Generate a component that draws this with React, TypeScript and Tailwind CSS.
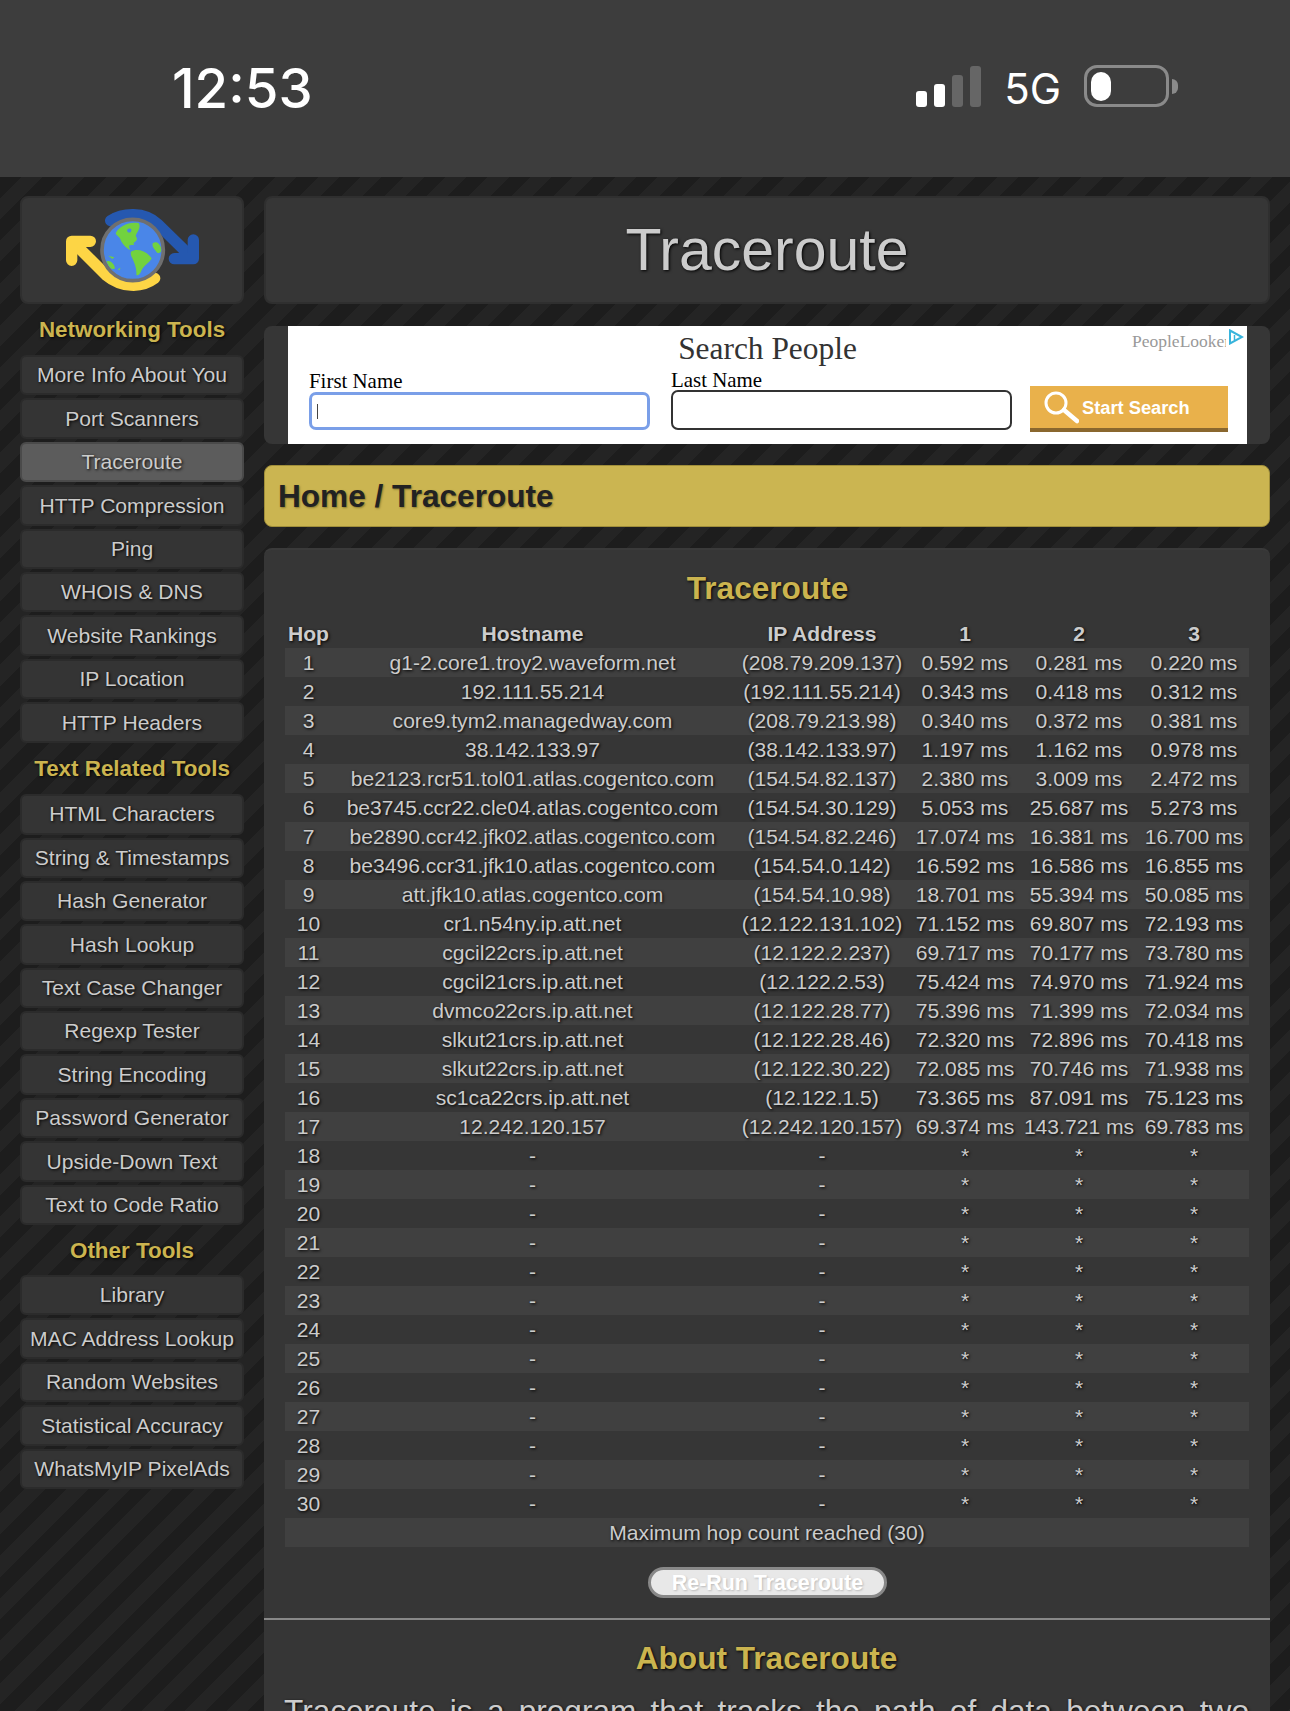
const shadow = "[text-shadow:1px_1px_3px_#000]";

const networking = ["More Info About You", "Port Scanners", "Traceroute", "HTTP Compression", "Ping", "WHOIS & DNS", "Website Rankings", "IP Location", "HTTP Headers"];
const textTools = ["HTML Characters", "String & Timestamps", "Hash Generator", "Hash Lookup", "Text Case Changer", "Regexp Tester", "String Encoding", "Password Generator", "Upside-Down Text", "Text to Code Ratio"];
const otherTools = ["Library", "MAC Address Lookup", "Random Websites", "Statistical Accuracy", "WhatsMyIP PixelAds"];

const hops = [
  ["g1-2.core1.troy2.waveform.net", "(208.79.209.137)", "0.592 ms", "0.281 ms", "0.220 ms"],
  ["192.111.55.214", "(192.111.55.214)", "0.343 ms", "0.418 ms", "0.312 ms"],
  ["core9.tym2.managedway.com", "(208.79.213.98)", "0.340 ms", "0.372 ms", "0.381 ms"],
  ["38.142.133.97", "(38.142.133.97)", "1.197 ms", "1.162 ms", "0.978 ms"],
  ["be2123.rcr51.tol01.atlas.cogentco.com", "(154.54.82.137)", "2.380 ms", "3.009 ms", "2.472 ms"],
  ["be3745.ccr22.cle04.atlas.cogentco.com", "(154.54.30.129)", "5.053 ms", "25.687 ms", "5.273 ms"],
  ["be2890.ccr42.jfk02.atlas.cogentco.com", "(154.54.82.246)", "17.074 ms", "16.381 ms", "16.700 ms"],
  ["be3496.ccr31.jfk10.atlas.cogentco.com", "(154.54.0.142)", "16.592 ms", "16.586 ms", "16.855 ms"],
  ["att.jfk10.atlas.cogentco.com", "(154.54.10.98)", "18.701 ms", "55.394 ms", "50.085 ms"],
  ["cr1.n54ny.ip.att.net", "(12.122.131.102)", "71.152 ms", "69.807 ms", "72.193 ms"],
  ["cgcil22crs.ip.att.net", "(12.122.2.237)", "69.717 ms", "70.177 ms", "73.780 ms"],
  ["cgcil21crs.ip.att.net", "(12.122.2.53)", "75.424 ms", "74.970 ms", "71.924 ms"],
  ["dvmco22crs.ip.att.net", "(12.122.28.77)", "75.396 ms", "71.399 ms", "72.034 ms"],
  ["slkut21crs.ip.att.net", "(12.122.28.46)", "72.320 ms", "72.896 ms", "70.418 ms"],
  ["slkut22crs.ip.att.net", "(12.122.30.22)", "72.085 ms", "70.746 ms", "71.938 ms"],
  ["sc1ca22crs.ip.att.net", "(12.122.1.5)", "73.365 ms", "87.091 ms", "75.123 ms"],
  ["12.242.120.157", "(12.242.120.157)", "69.374 ms", "143.721 ms", "69.783 ms"],
];

const rows = Array.from({ length: 30 }, (_, i) => hops[i] ?? ["-", "-", "*", "*", "*"]);

function StatusBar() {
  return (
    <header className="flex h-[177px] items-center bg-[#3d3d3d] pl-[172px] pr-[112px] font-['Inter',sans-serif] text-white">
      <div className="text-[54.5px] font-medium leading-none">12:53</div>
      <div className="ml-auto flex items-center">
        <div className="mb-[4px] flex items-end gap-[7px]">
          <span className="h-[16px] w-[11px] rounded-[3px] bg-white" />
          <span className="h-[23px] w-[11px] rounded-[3px] bg-white" />
          <span className="h-[32px] w-[11px] rounded-[3px] bg-[#666]" />
          <span className="h-[41px] w-[11px] rounded-[3px] bg-[#666]" />
        </div>
        <div className="ml-[23px] text-[42px] leading-none">5G</div>
        <div className="mb-[5px] ml-[23px] flex h-[42px] w-[85px] items-center rounded-[13px] border-[3px] border-[#8a8a8a] pl-[4px]">
          <span className="h-[29px] w-[20px] rounded-[10px] bg-white" />
        </div>
        <span className="mb-[5px] ml-[3px] h-[15px] w-[6px] rounded-r-full bg-[#8a8a8a]" />
      </div>
    </header>
  );
}

function Logo() {
  return (
    <svg viewBox="0 0 510 300" className="ml-[7px] h-[100px] w-[170px]" fill="none">
      <defs>
        <clipPath id="globe">
          <circle cx="245" cy="150" r="86" />
        </clipPath>
      </defs>
      <g strokeWidth="34" strokeLinecap="round" strokeLinejoin="round">
        <path d="M179 62C215 38 280 34 320 72L415 165" stroke="#2558b0" />
        <path d="M427 120V176H370" stroke="#2558b0" />
        <path d="M80 140L165 225C210 262 270 266 311 235" stroke="#fdd545" />
        <path d="M62 181V124H118" stroke="#fdd545" />
      </g>
      <circle cx="245" cy="150" r="92" fill="#4a86e8" stroke="#6f6f6f" strokeWidth="11" />
      <g clipPath="url(#globe)" fill="#72d23f">
        <path d="M194 100C205 78 235 64 264 70C270 85 260 92 254 108C264 120 252 125 247 130C237 133 230 135 238 150C224 144 212 130 208 117C204 110 196 106 194 100Z" />
        <path d="M240 155C255 145 285 150 302 175C295 190 280 195 272 210C268 222 262 228 256 225C258 205 250 190 244 175C240 168 238 160 240 155Z" />
        <path d="M305 130C315 122 327 128 332 150C330 158 320 165 314 152C308 145 303 140 305 130Z" />
        <path d="M165 185C175 178 190 190 192 205C185 210 170 205 165 185Z" />
        <path d="M172 167L190 172L184 177Z" />
        <path d="M200 208L209 203L205 211Z" />
        <path d="M225 128L245 126L250 134L236 136Z" />
      </g>
      <path d="M228 90C235 82 245 85 240 95C236 100 228 98 228 90Z" fill="#4a86e8" />
    </svg>
  );
}

function NavButton({ label, active }: { label: string; active?: boolean }) {
  return (
    <a
      className={`mb-[3px] flex h-[40.4px] items-center justify-center whitespace-nowrap rounded-[6px] border-2 text-[21.1px] text-[#ccc] ${shadow} ${
        active ? "border-[#4a4a4a] bg-[#5c5c5c]" : "border-[#2b2b2b] bg-[#343434]"
      }`}
    >
      {label}
    </a>
  );
}

function NavSection({ title, items, height }: { title: string; items: string[]; height: string }) {
  return (
    <nav>
      <h3 className={`flex items-center justify-center text-[22.4px] font-bold text-[#cbb44f] ${height} ${shadow}`}>{title}</h3>
      {items.map((item) => (
        <NavButton key={item} label={item} active={item === "Traceroute"} />
      ))}
    </nav>
  );
}

function Sidebar() {
  return (
    <aside className="w-[224px] shrink-0">
      <div className="flex h-[108px] items-center justify-center rounded-[8px] border-2 border-[#2f2f2f] bg-[#363636]">
        <Logo />
      </div>
      <NavSection title="Networking Tools" items={networking} height="h-[51px]" />
      <NavSection title="Text Related Tools" items={textTools} height="h-[48.6px] pb-[2px]" />
      <NavSection title="Other Tools" items={otherTools} height="h-[47px] pb-[2px]" />
    </aside>
  );
}

function Ad() {
  return (
    <div className="mt-[1px] shrink-0 rounded-[8px] bg-[#363636] pl-[24px] pr-[23px]">
      <div className="relative h-[118px] bg-white font-['Liberation_Serif',serif] text-black">
        <div className="pt-[4px] text-center text-[31.4px] leading-[37px] text-[#333]">Search People</div>
        <div className="absolute right-[21px] top-[5px] w-[94px] overflow-hidden whitespace-nowrap text-[17.5px] leading-[20px] text-[#999]">PeopleLooker</div>
        <svg viewBox="0 0 16 16" className="absolute right-[3px] top-[3px] h-[16px] w-[16px]" fill="none" stroke="#38b4dc" strokeWidth="2">
          <path d="M2 1.5L14 8L2 14.5Z" />
          <path d="M6.5 6V11" strokeWidth="1.5" />
        </svg>
        <div className="mt-[4px] flex items-start pl-[21px]">
          <label className="w-[341px] text-[20.9px] leading-[21px]">
            First Name
            <span className="relative block">
              <input className="block h-[38px] w-full rounded-[7px] border-[3px] border-[#7a9fe8] bg-white" />
              <span className="absolute left-[8px] top-[12px] h-[15px] w-[1px] bg-[#444]" />
            </span>
          </label>
          <label className="ml-[21px] w-[341px] text-[20.9px] leading-[19px]">
            Last Name
            <input className="block h-[40px] w-full rounded-[7px] border-2 border-[#333] bg-white" />
          </label>
          <button className="ml-[18px] mt-[15px] flex h-[46px] w-[198px] items-center border-b-[4px] border-[#8a672e] bg-[#e9b14b] pt-[1px] pl-[13px] font-['Liberation_Sans',sans-serif] text-[18.3px] font-bold text-white">
            <svg viewBox="0 0 36 36" className="h-[36px] w-[36px]" fill="none" stroke="#fff">
              <circle cx="13" cy="13" r="10" strokeWidth="3" />
              <path d="M21 20L34 31" strokeWidth="4.5" strokeLinecap="round" />
            </svg>
            <span className="ml-[3px]">Start Search</span>
          </button>
        </div>
      </div>
    </div>
  );
}

function TraceTable() {
  return (
    <table className="w-[964px] table-fixed border-collapse text-center text-[21.1px] leading-[29px] text-[#ccc]">
      <thead>
        <tr className={shadow}>
          <th className="w-[47px] font-bold">Hop</th>
          <th className="w-[401px] font-bold">Hostname</th>
          <th className="w-[178px] font-bold">IP Address</th>
          <th className="w-[108px] font-bold">1</th>
          <th className="w-[120px] font-bold">2</th>
          <th className="w-[110px] font-bold">3</th>
        </tr>
      </thead>
      <tbody>
        {rows.map((row, i) => (
          <tr key={i} className={`h-[29px] whitespace-nowrap ${shadow} ${i % 2 === 0 ? "bg-[#404040]" : ""}`}>
            <td>{i + 1}</td>
            {row.map((cell, j) => (
              <td key={j}>{cell}</td>
            ))}
          </tr>
        ))}
        <tr className={`h-[29px] bg-[#404040] ${shadow}`}>
          <td colSpan={6}>Maximum hop count reached (30)</td>
        </tr>
      </tbody>
    </table>
  );
}

function Content() {
  return (
    <section className="shrink-0 rounded-[8px] border-t-2 border-[#3a3a3a] bg-[#363636]">
      <div className="pl-[21px] pr-[20px]">
        <h2 className={`flex h-[69px] items-center justify-center pt-[9px] text-[31.6px] font-bold text-[#cbb44f] ${shadow}`}>Traceroute</h2>
        <TraceTable />
        <div className="flex justify-center py-[20px]">
          <button className="h-[31px] w-[239px] rounded-full border-[3px] border-[#888] bg-[#e8e8e8] text-[21.4px] font-bold leading-[22px] text-white [text-shadow:1px_1px_2px_#bbb]">
            Re-Run Traceroute
          </button>
        </div>
      </div>
      <hr className="border-t-2 border-[#888]" />
      <div className="pl-[20px] pr-[21px]">
        <h2 className={`flex h-[71px] items-center justify-center pt-[7px] text-[31.6px] font-bold text-[#cbb44f] ${shadow}`}>About Traceroute</h2>
        <p className={`text-justify text-[31.6px] leading-[40px] text-[#ccc] ${shadow}`}>
          Traceroute is a program that tracks the path of data between two computers on a network, listing every router along the way and the time each one takes to respond.
        </p>
      </div>
    </section>
  );
}

export default function App() {
  return (
    <div className="h-[1711px] overflow-hidden bg-[#1f1f1f] font-['Liberation_Sans',sans-serif]">
      <StatusBar />
      <div className="flex h-[1534px] gap-[20px] bg-[repeating-linear-gradient(135deg,#1d1d1d_0,#1d1d1d_15px,#242424_15px,#242424_30px)] pl-[20px] pr-[20px] pt-[19px]">
        <Sidebar />
        <main className="flex w-[1006px] flex-col gap-[21px]">
          <div className="flex h-[108px] shrink-0 items-center justify-center rounded-[8px] border-2 border-[#2f2f2f] bg-[#363636]">
            <h1 className={`text-[59px] leading-none text-[#ccc] ${shadow}`}>Traceroute</h1>
          </div>
          <Ad />
          <div className="flex h-[62px] shrink-0 items-center rounded-[8px] border border-[#a08e3a] bg-[#cbb551] pl-[13px] pt-[1px] text-[31.6px] font-bold text-[#222] [text-shadow:1px_1px_2px_#8a7a30]">
            Home / Traceroute
          </div>
          <Content />
        </main>
      </div>
    </div>
  );
}
